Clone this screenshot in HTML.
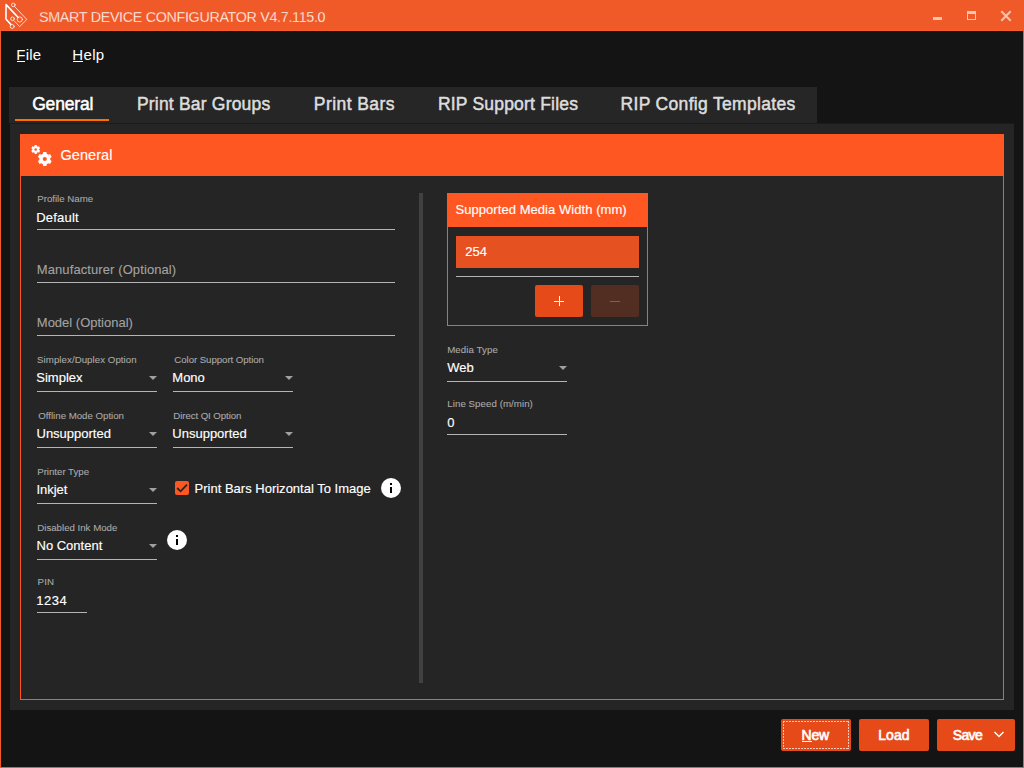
<!DOCTYPE html>
<html><head><meta charset="utf-8">
<style>
*{margin:0;padding:0;box-sizing:border-box}
html,body{width:1024px;height:768px;overflow:hidden;background:#141414;font-family:"Liberation Sans",sans-serif}
.a{position:absolute}
.t{position:absolute;white-space:nowrap;line-height:1}
.ul{position:absolute;height:1px;background:#B4B4B4}
.arr{position:absolute;width:0;height:0;border-left:4px solid transparent;border-right:4px solid transparent;border-top:4px solid #A0A0A0}
.btn{position:absolute;background:#E64A19;border-radius:2px}
.info{position:absolute;width:20px;height:20px;border-radius:50%;background:#fff}
.info:before{content:"";position:absolute;left:9px;top:5px;width:2px;height:2px;background:#000}
.info:after{content:"";position:absolute;left:9px;top:9px;width:2px;height:6px;background:#000}
</style></head><body>
<!-- window frame -->
<div class="a" style="left:0;top:0;width:1024px;height:31px;background:#F05A28"></div>
<div class="a" style="left:0;top:30px;width:1024px;height:1px;background:#FA5E2A"></div>
<div class="a" style="left:0;top:31px;width:1px;height:737px;background:#F05A28"></div>
<div class="a" style="left:1023px;top:31px;width:1px;height:737px;background:#F05A28"></div>
<div class="a" style="left:0;top:767px;width:1024px;height:1px;background:#F05A28"></div>
<!-- logo -->
<svg class="a" style="left:0;top:0" width="32" height="31" viewBox="0 0 32 31">
 <g fill="none" stroke="#fff" stroke-linecap="round" stroke-linejoin="round">
  <path d="M6.1 4.6 L5.9 19 L10.8 24.4 M6.1 4.6 L18 17.3" stroke-width="1.6"/>
  <g stroke-opacity="0.8" stroke-width="0.95">
   <circle cx="13.3" cy="4.9" r="1.8"/>
   <circle cx="19.8" cy="19.5" r="2.6"/>
   <circle cx="12.5" cy="18.8" r="1.8"/>
   <circle cx="12.2" cy="26.5" r="2"/>
   <path d="M14.7 6.6 L26.8 19.5 L19.6 26.6 L13.9 20.6"/>
  </g>
 </g>
</svg>
<!-- window buttons -->
<div class="a" style="left:933px;top:17px;width:9px;height:3px;background:#F9C4AE"></div>
<div class="a" style="left:967px;top:11px;width:9px;height:9px;border:1px solid #F9C4AE;border-top-width:3px"></div>
<svg class="a" style="left:1000px;top:10px" width="12" height="12" viewBox="0 0 12 12"><path d="M1.3 1.3 L10.7 10.7 M10.7 1.3 L1.3 10.7" stroke="#F9C4AE" stroke-width="2"/></svg>
<!-- menu underlines -->
<div class="a" style="left:17px;top:61px;width:8px;height:1px;background:#fff"></div>
<div class="a" style="left:73px;top:61px;width:10px;height:1px;background:#fff"></div>
<!-- tab header -->
<div class="a" style="left:9px;top:87px;width:808px;height:36px;background:#262626"></div>
<div class="a" style="left:9px;top:123px;width:1005px;height:1px;background:#1B1B1B"></div>
<div class="a" style="left:15px;top:119px;width:94px;height:2px;background:#FF6E00"></div>
<!-- content panel -->
<div class="a" style="left:10px;top:124px;width:1004px;height:586px;background:#252525"></div>
<!-- group box -->
<div class="a" style="left:20px;top:134px;width:984px;height:566px;border:1px solid #FF5722"></div>
<div class="a" style="left:20px;top:134px;width:984px;height:42px;background:#FF5722"></div>
<svg class="a" style="left:26px;top:140px" width="30" height="30" viewBox="0 0 30 30">
 <path fill="#fff" fill-rule="evenodd" d="M16.90 13.84L17.18 11.98L20.42 11.98L20.70 13.84A5.5 5.5 0 0 1 22.32 14.77L24.07 14.09L25.69 16.90L24.22 18.06A5.5 5.5 0 0 1 24.22 19.94L25.69 21.10L24.07 23.91L22.32 23.23A5.5 5.5 0 0 1 20.70 24.16L20.42 26.02L17.18 26.02L16.90 24.16A5.5 5.5 0 0 1 15.28 23.23L13.53 23.91L11.91 21.10L13.38 19.94A5.5 5.5 0 0 1 13.38 18.06L11.91 16.90L13.53 14.09L15.28 14.77A5.5 5.5 0 0 1 16.90 13.84ZM20.90 19.00A2.1 2.1 0 1 0 16.70 19.00A2.1 2.1 0 1 0 20.90 19.00ZM8.50 6.21L8.68 5.02L10.72 5.02L10.90 6.21A3.5 3.5 0 0 1 11.95 6.82L13.07 6.37L14.10 8.14L13.15 8.90A3.5 3.5 0 0 1 13.15 10.10L14.10 10.86L13.07 12.63L11.95 12.18A3.5 3.5 0 0 1 10.90 12.79L10.72 13.98L8.68 13.98L8.50 12.79A3.5 3.5 0 0 1 7.45 12.18L6.33 12.63L5.30 10.86L6.25 10.10A3.5 3.5 0 0 1 6.25 8.90L5.30 8.14L6.33 6.37L7.45 6.82A3.5 3.5 0 0 1 8.50 6.21ZM11.00 9.50A1.3 1.3 0 1 0 8.40 9.50A1.3 1.3 0 1 0 11.00 9.50Z"/>
</svg>
<!-- left fields underlines -->
<div class="ul" style="left:37px;top:229px;width:358px"></div>
<div class="ul" style="left:37px;top:282px;width:358px"></div>
<div class="ul" style="left:37px;top:335px;width:358px"></div>
<div class="ul" style="left:37px;top:391px;width:120px"></div>
<div class="ul" style="left:173px;top:391px;width:120px"></div>
<div class="ul" style="left:37px;top:447px;width:120px"></div>
<div class="ul" style="left:173px;top:447px;width:120px"></div>
<div class="ul" style="left:37px;top:503px;width:120px"></div>
<div class="ul" style="left:37px;top:559px;width:120px"></div>
<div class="ul" style="left:37px;top:612px;width:50px"></div>
<div class="arr" style="left:149px;top:376px"></div>
<div class="arr" style="left:285px;top:376px"></div>
<div class="arr" style="left:149px;top:432px"></div>
<div class="arr" style="left:285px;top:432px"></div>
<div class="arr" style="left:149px;top:488px"></div>
<div class="arr" style="left:149px;top:544px"></div>
<!-- checkbox -->
<div class="a" style="left:175px;top:481px;width:14px;height:14px;border-radius:2px;background:#FF5722"></div>
<svg class="a" style="left:175px;top:481px" width="14" height="14" viewBox="0 0 14 14"><path d="M2.2 7 L5.6 10.3 L12 3.6" fill="none" stroke="#252525" stroke-width="1.8"/></svg>
<div class="info" style="left:381px;top:478px"></div>
<div class="info" style="left:167px;top:530px"></div>
<!-- separator -->
<div class="a" style="left:419px;top:193px;width:4px;height:490px;background:#414141"></div>
<!-- media width box -->
<div class="a" style="left:447px;top:193px;width:201px;height:133px;border:1px solid #FF5722"></div>
<div class="a" style="left:447px;top:193px;width:201px;height:34px;background:#FF5722"></div>
<div class="a" style="left:456px;top:236px;width:183px;height:32px;background:#E65121"></div>
<div class="ul" style="left:456px;top:276px;width:183px"></div>
<div class="btn" style="left:535px;top:285px;width:48px;height:32px"></div>
<div class="btn" style="left:591px;top:285px;width:48px;height:32px;background:#522D22"></div>
<div class="a" style="left:554px;top:301px;width:10px;height:1px;background:#fff"></div>
<div class="a" style="left:558.5px;top:296px;width:1px;height:10px;background:#fff"></div>
<div class="a" style="left:610px;top:301px;width:10px;height:1px;background:#6E6662"></div>
<!-- right fields -->
<div class="ul" style="left:447px;top:381px;width:120px"></div>
<div class="arr" style="left:559px;top:366px"></div>
<div class="ul" style="left:447px;top:434px;width:120px"></div>
<!-- bottom buttons -->
<div class="btn" style="left:781px;top:719px;width:70px;height:32px"></div>
<svg class="a" style="left:781px;top:719px" width="70" height="32" viewBox="0 0 70 32"><g stroke="#F7CDBA" stroke-width="1" stroke-dasharray="2 1" fill="none"><path d="M2 2.5 H68"/><path d="M2 29.5 H68"/><path d="M2.5 2 V30"/><path d="M67.5 2 V30"/></g></svg>
<div class="a" style="left:802px;top:741px;width:10px;height:1px;background:#fff"></div>
<div class="btn" style="left:859px;top:719px;width:70px;height:32px"></div>
<div class="btn" style="left:937px;top:719px;width:78px;height:32px"></div>
<svg class="a" style="left:993px;top:730px" width="12" height="10" viewBox="0 0 12 10"><path d="M1.5 2 L6 6.5 L10.5 2" fill="none" stroke="#fff" stroke-width="1.5"/></svg>
<div class="t" style="left:38.60px;top:8.86px;color:#FFFFFF;font-size:15.4px;font-weight:400;letter-spacing:-0.344px;-webkit-text-stroke:0.3px #F05A28;;transform:scaleX(0.93);transform-origin:0 0;">SMART DEVICE CONFIGURATOR V4.7.115.0</div>
<div class="t" style="left:16.30px;top:47.30px;color:#FFFFFF;font-size:15px;font-weight:400;letter-spacing:0.167px;;">File</div>
<div class="t" style="left:72.30px;top:47.30px;color:#FFFFFF;font-size:15px;font-weight:400;letter-spacing:0.333px;;">Help</div>
<div class="t" style="left:32.20px;top:95.89px;color:#FFFFFF;font-size:17.5px;font-weight:400;letter-spacing:-0.183px;-webkit-text-stroke:0.5px currentColor;;">General</div>
<div class="t" style="left:136.90px;top:95.89px;color:#DDDDDD;font-size:17.5px;font-weight:400;letter-spacing:0.200px;-webkit-text-stroke:0.5px currentColor;;">Print Bar Groups</div>
<div class="t" style="left:313.80px;top:95.89px;color:#DDDDDD;font-size:17.5px;font-weight:400;letter-spacing:0.433px;-webkit-text-stroke:0.5px currentColor;;">Print Bars</div>
<div class="t" style="left:437.90px;top:95.89px;color:#DDDDDD;font-size:17.5px;font-weight:400;letter-spacing:0.200px;-webkit-text-stroke:0.5px currentColor;;">RIP Support Files</div>
<div class="t" style="left:620.60px;top:95.89px;color:#DDDDDD;font-size:17.5px;font-weight:400;letter-spacing:0.316px;-webkit-text-stroke:0.5px currentColor;;">RIP Config Templates</div>
<div class="t" style="left:60.50px;top:147.93px;color:#FFFFFF;font-size:14.5px;font-weight:400;letter-spacing:0.050px;-webkit-text-stroke:0.15px currentColor;;">General</div>
<div class="t" style="left:37.20px;top:194.49px;color:#A9A9A9;font-size:9.7px;font-weight:400;letter-spacing:0.000px;-webkit-text-stroke:0.1px currentColor;;">Profile Name</div>
<div class="t" style="left:36.30px;top:211.00px;color:#FFFFFF;font-size:13px;font-weight:400;letter-spacing:0.183px;-webkit-text-stroke:0.15px currentColor;;">Default</div>
<div class="t" style="left:36.80px;top:263.10px;color:#A3A3A3;font-size:13px;font-weight:400;letter-spacing:0.095px;-webkit-text-stroke:0.1px currentColor;;">Manufacturer (Optional)</div>
<div class="t" style="left:36.80px;top:315.90px;color:#A3A3A3;font-size:13px;font-weight:400;letter-spacing:0.000px;-webkit-text-stroke:0.1px currentColor;;">Model (Optional)</div>
<div class="t" style="left:37.10px;top:354.69px;color:#A9A9A9;font-size:9.7px;font-weight:400;letter-spacing:0.050px;-webkit-text-stroke:0.1px currentColor;;">Simplex/Duplex Option</div>
<div class="t" style="left:36.30px;top:371.10px;color:#FFFFFF;font-size:13px;font-weight:400;letter-spacing:0.000px;-webkit-text-stroke:0.15px currentColor;;">Simplex</div>
<div class="t" style="left:174.30px;top:354.69px;color:#A9A9A9;font-size:9.7px;font-weight:400;letter-spacing:-0.068px;-webkit-text-stroke:0.1px currentColor;;">Color Support Option</div>
<div class="t" style="left:172.30px;top:371.10px;color:#FFFFFF;font-size:13px;font-weight:400;letter-spacing:0.000px;-webkit-text-stroke:0.15px currentColor;;">Mono</div>
<div class="t" style="left:38.30px;top:410.59px;color:#A9A9A9;font-size:9.7px;font-weight:400;letter-spacing:-0.017px;-webkit-text-stroke:0.1px currentColor;;">Offline Mode Option</div>
<div class="t" style="left:36.50px;top:427.10px;color:#FFFFFF;font-size:13px;font-weight:400;letter-spacing:0.000px;-webkit-text-stroke:0.15px currentColor;;">Unsupported</div>
<div class="t" style="left:173.30px;top:410.59px;color:#A9A9A9;font-size:9.7px;font-weight:400;letter-spacing:-0.087px;-webkit-text-stroke:0.1px currentColor;;">Direct QI Option</div>
<div class="t" style="left:172.30px;top:427.10px;color:#FFFFFF;font-size:13px;font-weight:400;letter-spacing:0.000px;-webkit-text-stroke:0.15px currentColor;;">Unsupported</div>
<div class="t" style="left:37.20px;top:466.69px;color:#A9A9A9;font-size:9.7px;font-weight:400;letter-spacing:-0.018px;-webkit-text-stroke:0.1px currentColor;;">Printer Type</div>
<div class="t" style="left:36.40px;top:483.10px;color:#FFFFFF;font-size:13px;font-weight:400;letter-spacing:0.000px;-webkit-text-stroke:0.15px currentColor;;">Inkjet</div>
<div class="t" style="left:37.30px;top:522.59px;color:#A9A9A9;font-size:9.7px;font-weight:400;letter-spacing:-0.013px;-webkit-text-stroke:0.1px currentColor;;">Disabled Ink Mode</div>
<div class="t" style="left:36.50px;top:539.10px;color:#FFFFFF;font-size:13px;font-weight:400;letter-spacing:0.000px;-webkit-text-stroke:0.15px currentColor;;">No Content</div>
<div class="t" style="left:37.60px;top:577.09px;color:#A9A9A9;font-size:9.7px;font-weight:400;letter-spacing:0.150px;-webkit-text-stroke:0.1px currentColor;;">PIN</div>
<div class="t" style="left:36.30px;top:594.10px;color:#FFFFFF;font-size:13px;font-weight:400;letter-spacing:0.533px;-webkit-text-stroke:0.15px currentColor;;">1234</div>
<div class="t" style="left:194.50px;top:481.80px;color:#FFFFFF;font-size:13px;font-weight:400;letter-spacing:0.007px;-webkit-text-stroke:0.15px currentColor;;">Print Bars Horizontal To Image</div>
<div class="t" style="left:455.50px;top:203.00px;color:#FFFFFF;font-size:13px;font-weight:400;letter-spacing:0.056px;-webkit-text-stroke:0.15px currentColor;;">Supported Media Width (mm)</div>
<div class="t" style="left:465.20px;top:245.00px;color:#FFFFFF;font-size:13px;font-weight:400;letter-spacing:0.000px;-webkit-text-stroke:0.15px currentColor;;">254</div>
<div class="t" style="left:447.20px;top:344.89px;color:#A9A9A9;font-size:9.7px;font-weight:400;letter-spacing:0.078px;-webkit-text-stroke:0.1px currentColor;;">Media Type</div>
<div class="t" style="left:447.30px;top:360.60px;color:#FFFFFF;font-size:13px;font-weight:400;letter-spacing:0.000px;-webkit-text-stroke:0.15px currentColor;;">Web</div>
<div class="t" style="left:447.30px;top:398.89px;color:#A9A9A9;font-size:9.7px;font-weight:400;letter-spacing:0.059px;-webkit-text-stroke:0.1px currentColor;;">Line Speed (m/min)</div>
<div class="t" style="left:447.30px;top:416.00px;color:#FFFFFF;font-size:13px;font-weight:400;letter-spacing:0.000px;-webkit-text-stroke:0.15px currentColor;;">0</div>
<div class="t" style="left:801.50px;top:728.15px;color:#FFFFFF;font-size:14px;font-weight:400;letter-spacing:-0.200px;-webkit-text-stroke:0.6px currentColor;;">New</div>
<div class="t" style="left:878.20px;top:728.15px;color:#FFFFFF;font-size:14px;font-weight:400;letter-spacing:0.067px;-webkit-text-stroke:0.6px currentColor;;">Load</div>
<div class="t" style="left:952.80px;top:728.15px;color:#FFFFFF;font-size:14px;font-weight:400;letter-spacing:-0.667px;-webkit-text-stroke:0.6px currentColor;;">Save</div>
</body></html>
